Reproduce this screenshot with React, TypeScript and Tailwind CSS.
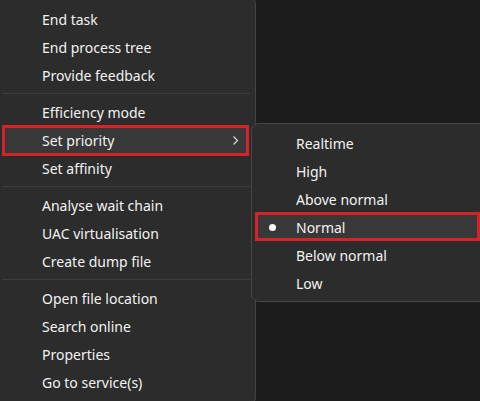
import React from 'react';

type Entry = { label: string; sub?: boolean; boxed?: boolean } | 'sep';

const mainItems: Entry[] = [
  { label: 'End task' },
  { label: 'End process tree' },
  { label: 'Provide feedback' },
  'sep',
  { label: 'Efficiency mode' },
  { label: 'Set priority', sub: true, boxed: true },
  { label: 'Set affinity' },
  'sep',
  { label: 'Analyse wait chain' },
  { label: 'UAC virtualisation' },
  { label: 'Create dump file' },
  'sep',
  { label: 'Open file location' },
  { label: 'Search online' },
  { label: 'Properties' },
  { label: 'Go to service(s)' },
];

const priorities = ['Realtime', 'High', 'Above normal', 'Normal', 'Below normal', 'Low'];

function Chevron() {
  return (
    <svg className="relative" width="9" height="11" viewBox="0 0 9 11">
      <polyline points="2.5,1.5 6.5,5.5 2.5,9.5" fill="none" stroke="#d8d8d8" strokeWidth="1.2" />
    </svg>
  );
}

// red marker box drawn over the hovered row
function Highlight({ className }: { className: string }) {
  return <span className={`absolute border-[3px] border-[#d3242c] bg-[#383838] ${className}`} />;
}

function MainMenu() {
  return (
    <div className="mt-[-4px] flex h-[409px] w-[256px] flex-col rounded-r-lg border-y border-r border-[#444444] bg-[#2c2c2c] pt-2">
      {mainItems.map((it, i) =>
        it === 'sep' ? (
          <div key={i} className="flex h-[9px] items-center">
            <div className="ml-[2px] mr-[5px] h-px flex-1 bg-[#3d3d3d]" />
          </div>
        ) : (
          <div key={i} className="relative flex h-[28px] items-center justify-between pl-[42px] pr-[15px]">
            {it.boxed && <Highlight className="left-[2px] right-[6px] top-[-1px] bottom-[-2px]" />}
            <span className="relative">{it.label}</span>
            {it.sub && <Chevron />}
          </div>
        )
      )}
    </div>
  );
}

function SubMenu() {
  return (
    <div className="absolute left-[251px] top-[123px] flex w-[240px] flex-col rounded-l-lg border border-[#474747] bg-[#2c2c2c] pt-[5px] pb-[4px]">
      {priorities.map(p => (
        <div key={p} className="relative flex h-[28px] items-center pl-[17px]">
          {p === 'Normal' && <Highlight className="left-[3px] w-[225px] top-[-1px] bottom-0" />}
          <span className="relative flex w-[27px] items-center">
            {p === 'Normal' && <span className="h-[7px] w-[7px] rounded-full bg-white" />}
          </span>
          <span className="relative">{p}</span>
        </div>
      ))}
    </div>
  );
}

export default function App() {
  return (
    <div
      className="relative h-[401px] w-[480px] overflow-hidden bg-[#1c1c1c] text-[14px] text-[#f2f2f2]"
      style={{ fontFamily: '"Noto Sans", "Open Sans", sans-serif' }}
    >
      <MainMenu />
      <SubMenu />
    </div>
  );
}
